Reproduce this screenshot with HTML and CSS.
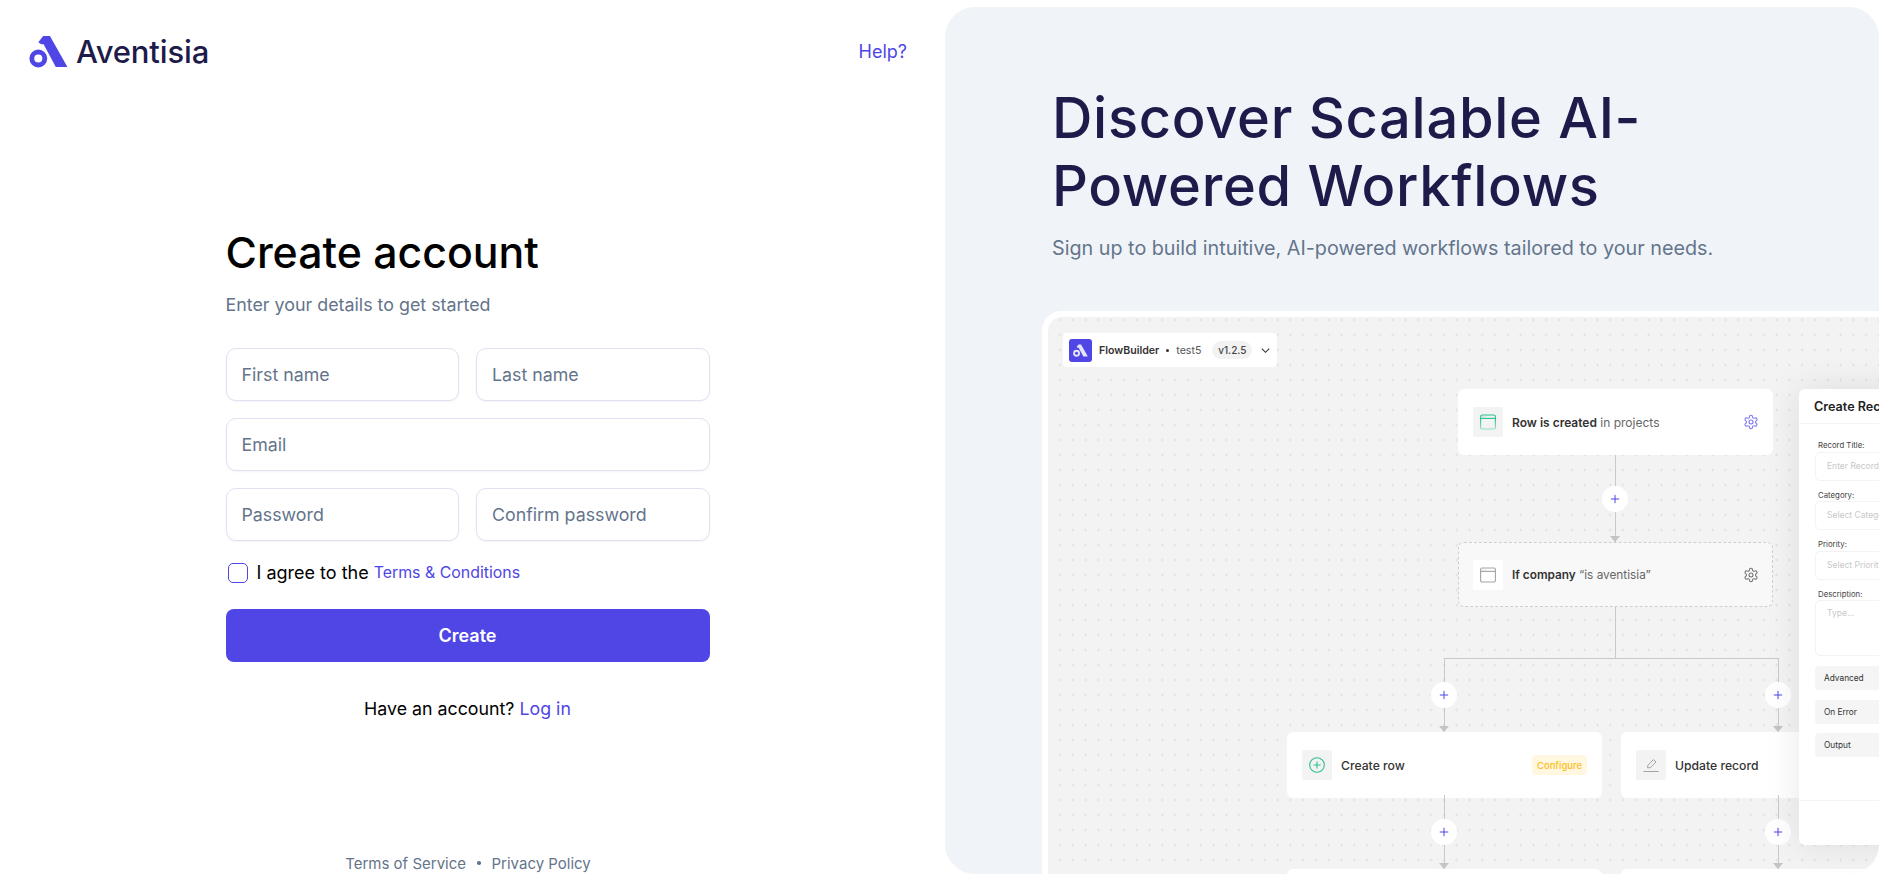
FILE: index.html
```html
<!DOCTYPE html>
<html lang="en">
<head>
<meta charset="utf-8">
<title>Aventisia - Create account</title>
<link rel="stylesheet" href="styles.css">
</head>
<body>
<svg class="defs" width="0" height="0" aria-hidden="true">
  <defs>
    <linearGradient id="winfade" x1="0" y1="0" x2="0" y2="1">
      <stop offset="0.3" stop-color="#2cc08e"/>
      <stop offset="1" stop-color="#93e2c4"/>
    </linearGradient>
  </defs>
  <symbol id="gear" viewBox="0 0 24 24">
    <path d="M12.22 2h-.44a2 2 0 0 0-2 2v.18a2 2 0 0 1-1 1.73l-.43.25a2 2 0 0 1-2 0l-.15-.08a2 2 0 0 0-2.73.73l-.22.38a2 2 0 0 0 .73 2.73l.15.1a2 2 0 0 1 1 1.72v.51a2 2 0 0 1-1 1.74l-.15.09a2 2 0 0 0-.73 2.73l.22.38a2 2 0 0 0 2.73.73l.15-.08a2 2 0 0 1 2 0l.43.25a2 2 0 0 1 1 1.73V20a2 2 0 0 0 2 2h.44a2 2 0 0 0 2-2v-.18a2 2 0 0 1 1-1.73l.43-.25a2 2 0 0 1 2 0l.15.08a2 2 0 0 0 2.73-.73l.22-.39a2 2 0 0 0-.73-2.73l-.15-.08a2 2 0 0 1-1-1.74v-.5a2 2 0 0 1 1-1.74l.15-.09a2 2 0 0 0 .73-2.73l-.22-.38a2 2 0 0 0-2.73-.73l-.15.08a2 2 0 0 1-2 0l-.43-.25a2 2 0 0 1-1-1.73V4a2 2 0 0 0-2-2z"/>
    <circle cx="12" cy="12" r="3"/>
  </symbol>
  <symbol id="plus" viewBox="0 0 12 12">
    <path d="M6 1v10M1 6h10"/>
  </symbol>
</svg>
<div class="page">
  <section class="left">
    <header class="top">
      <a class="brand" href="#">
        <svg class="brand-mark" viewBox="0 0 40 34" aria-hidden="true">
          <path fill="#4f46e5" fill-rule="evenodd" d="M9.5 15a9.2 9.2 0 1 1 0 18.4 9.2 9.2 0 0 1 0-18.4zm0 5a4.2 4.2 0 1 0 0 8.4 4.2 4.2 0 0 0 0-8.4z"/>
          <path fill="#4f46e5" d="M9.5 7.5 14.5 1h7L39.5 33h-12L15 9.5h-2.5z"/>
        </svg>
        <span class="brand-name">Aventisia</span>
      </a>
      <a class="help" href="#">Help?</a>
    </header>
    <main class="form-wrap">
      <form class="form">
        <h1 class="title">Create account</h1>
        <p class="subtitle">Enter your details to get started</p>
        <div class="fields">
          <input class="input" type="text" placeholder="First name">
          <input class="input" type="text" placeholder="Last name">
          <input class="input wide" type="email" placeholder="Email">
          <input class="input" type="password" placeholder="Password">
          <input class="input" type="password" placeholder="Confirm password">
        </div>
        <label class="agree">
          <span class="check"></span>
          <span>I agree to the</span>
          <a class="terms" href="#">Terms &amp; Conditions</a>
        </label>
        <button class="submit" type="button">Create</button>
        <p class="login">Have an account? <a href="#">Log in</a></p>
      </form>
    </main>
    <footer class="legal">
      <a href="#">Terms of Service</a>
      <span class="legal-dot"></span>
      <a href="#">Privacy Policy</a>
    </footer>
  </section>

  <aside class="promo">
    <h2 class="promo-title">Discover Scalable AI-<br>Powered Workflows</h2>
    <p class="promo-sub">Sign up to build intuitive, AI-powered workflows tailored to your needs.</p>
    <div class="frame">
      <div class="toolbar">
        <span class="tb-logo">
          <svg viewBox="0 0 40 34" aria-hidden="true">
            <path fill="#fff" fill-opacity=".85" fill-rule="evenodd" d="M9.5 15a9.2 9.2 0 1 1 0 18.4 9.2 9.2 0 0 1 0-18.4zm0 5a4.2 4.2 0 1 0 0 8.4 4.2 4.2 0 0 0 0-8.4z"/>
            <path fill="#fff" fill-opacity=".85" d="M9.5 7.5 14.5 1h7L39.5 33h-12L15 9.5h-2.5z"/>
          </svg>
        </span>
        <b class="tb-name">FlowBuilder</b>
        <span class="tb-dot"></span>
        <span class="tb-test">test5</span>
        <span class="tb-ver">v1.2.5</span>
        <svg class="tb-chev" viewBox="0 0 12 12" aria-hidden="true"><path d="M2 4l4 4 4-4"/></svg>
      </div>

      <span class="edge e1"></span>
      <span class="edge e2 noarrow"></span>
      <span class="hline"></span>
      <span class="edge e3"></span>
      <span class="edge e4"></span>

      <span class="add a1"><svg><use href="#plus"/></svg></span>
      <span class="add a2"><svg><use href="#plus"/></svg></span>
      <span class="add a3"><svg><use href="#plus"/></svg></span>

      <div class="node n1">
        <span class="ico">
          <svg viewBox="0 0 16 16" aria-hidden="true">
            <rect x=".6" y="1" width="14.8" height="14" rx="1.5" fill="none" stroke="url(#winfade)" stroke-width="1.1"/>
            <path d="M.6 4.4h14.8" stroke="#2cc08e" stroke-width="1.1"/>
            <path d="M2 2.8h.6M3.5 2.8h.6M5 2.8h.6" stroke="#2cc08e" stroke-width=".6"/>
          </svg>
        </span>
        <span class="node-text"><b>Row is created</b> in projects</span>
        <svg class="gear gear-violet"><use href="#gear"/></svg>
      </div>
      <div class="node n2">
        <span class="ico ico-white">
          <svg viewBox="0 0 16 16" aria-hidden="true">
            <rect x=".6" y="1" width="14.8" height="14" rx="1.5" fill="none" stroke="#a3a3a3" stroke-width="1.1"/>
            <path d="M.6 4.4h14.8" stroke="#a3a3a3" stroke-width="1.1"/>
            <path d="M2 2.8h.6M3.5 2.8h.6M5 2.8h.6" stroke="#a3a3a3" stroke-width=".6"/>
          </svg>
        </span>
        <span class="node-text"><b>If company</b> “is aventisia”</span>
        <svg class="gear"><use href="#gear"/></svg>
      </div>
      <div class="node n3">
        <span class="ico">
          <svg viewBox="0 0 16 16" aria-hidden="true">
            <circle cx="8" cy="8" r="7.3" fill="none" stroke="#2cc08e" stroke-width="1.1"/>
            <path d="M8 4.4v7.2M4.4 8h7.2" stroke="#2cc08e" stroke-width="1.1"/>
          </svg>
        </span>
        <span class="node-label">Create row</span>
        <span class="chip">Configure</span>
      </div>
      <div class="node n4">
        <span class="ico">
          <svg viewBox="0 0 16 16" aria-hidden="true">
            <path d="M4.5 10.8l.5-2.6L10.4 2.6 13 5 7.4 10.6z" fill="none" stroke="#a3a3a3" stroke-width="1"/>
            <path d="M.4 14.5h15.2" stroke="#a3a3a3" stroke-width="1"/>
          </svg>
        </span>
        <span class="node-label">Update record</span>
      </div>
      <div class="node n5"></div>
      <div class="node n6"></div>

      <span class="edge e5"></span>
      <span class="edge e6"></span>
      <span class="add a4"><svg><use href="#plus"/></svg></span>
      <span class="add a5"><svg><use href="#plus"/></svg></span>

      <div class="sheet">
        <div class="sheet-head">Create Record</div>
        <div class="sheet-body">
          <div class="field"><span class="f-label">Record Title:</span><span class="f-input">Enter Record Title</span></div>
          <div class="field"><span class="f-label">Category:</span><span class="f-input">Select Category</span></div>
          <div class="field"><span class="f-label">Priority:</span><span class="f-input">Select Priority</span></div>
          <div class="field"><span class="f-label">Description:</span><span class="f-input f-area">Type...</span></div>
          <div class="fold">Advanced</div>
          <div class="fold">On Error</div>
          <div class="fold">Output</div>
        </div>
        <div class="sheet-foot"></div>
      </div>
    </div>
  </aside>
</div>
</body>
</html>
```

FILE: styles.css
```css
* { box-sizing: border-box; }

html, body {
  margin: 0;
  height: 100%;
  background: #fff;
  font-family: Inter, "Noto Sans", sans-serif;
  overflow: hidden;
}

a { text-decoration: none; }

.defs { position: absolute; }

.page {
  display: flex;
  height: 875px;
}

/* Left column */
.left {
  flex: 0 0 936px;
  display: flex;
  flex-direction: column;
}

.top {
  display: flex;
  align-items: center;
  justify-content: space-between;
  height: 103px;
  padding: 0 29px;
}

.brand { display: flex; align-items: center; gap: 8px; }
.brand-mark { width: 39px; height: 33px; display: block; }
.brand-name {
  font-family: Inter, sans-serif;
  font-size: 31px;
  font-weight: 500;
  letter-spacing: -0.15px;
  color: #1e1b4b;
  line-height: 33px;
}

.help { font-size: 18px; color: #4f46e5; }

.form-wrap { flex: 1; display: flex; justify-content: center; padding-top: 122px; }

.form { width: 484px; margin-right: 1px; }

.title {
  margin: 0;
  font-size: 42.8px;
  font-weight: 500;
  line-height: 56px;
  color: #000;
}

.subtitle {
  margin: 11.5px 0 0;
  font-size: 17.85px;
  line-height: 24px;
  color: #64748b;
}

.fields {
  display: grid;
  grid-template-columns: 1fr 1fr;
  column-gap: 17px;
  row-gap: 17px;
  margin-top: 31px;
}

.input {
  height: 53px;
  width: 100%;
  padding: 0 15px;
  border: 1px solid #e2e0f3;
  border-radius: 10px;
  background: #fff;
  font: 400 17.8px Inter, sans-serif;
  color: #1e1b4b;
  outline: none;
  box-shadow: 0 1px 2px rgba(30, 27, 75, .05);
}
.input::placeholder { color: #64748b; opacity: 1; }
.wide { grid-column: 1 / -1; }

.agree {
  display: flex;
  align-items: center;
  margin-top: 21px;
  padding-left: 2px;
  font-size: 18px;
  line-height: 22px;
  color: #000;
}

.check {
  width: 20px;
  height: 20px;
  margin-right: 9px;
  border: 1.5px solid #4f46e5;
  border-radius: 5px;
}

.terms { margin-left: 5px; font-size: 15.9px; color: #4f46e5; }

.submit {
  display: block;
  width: 100%;
  height: 53px;
  margin-top: 25.2px;
  border: 0;
  border-radius: 8px;
  background: #4f46e5;
  color: #fff;
  font: 600 18px Inter, sans-serif;
}

.login {
  margin: 35.2px 0 0;
  text-align: center;
  font-size: 17.8px;
  line-height: 24px;
  color: #000;
}
.login a { color: #4f46e5; }

.legal {
  display: flex;
  justify-content: center;
  align-items: center;
  gap: 11px;
  height: 24px;
  font-size: 15px;
}
.legal a { color: #64748b; }
.legal-dot { width: 3.5px; height: 3.5px; border-radius: 50%; background: #64748b; }

/* Right panel */
.promo {
  flex: 1;
  margin: 7px 0 1px 9px;
  padding: 76.5px 0 0 107px;
  background: #f0f4f9;
  border-radius: 30px;
  overflow: hidden;
  min-width: 0;
}

.promo-title {
  margin: 0;
  font-size: 56px;
  font-weight: 500;
  line-height: 68px;
  letter-spacing: .7px;
  color: #1e1b4b;
}

.promo-sub {
  margin: 14.5px 0 0;
  font-size: 19.75px;
  line-height: 28px;
  color: #64748b;
}

.frame {
  position: relative;
  width: 1000px;
  height: 700px;
  margin: 49px 0 0 -10px;
  border: 6px solid #fff;
  border-radius: 20px;
  background-color: #f3f3f3;
  background-image: radial-gradient(circle, #e2e2e2 1px, transparent 1.3px);
  background-size: 12.8px 15px;
  background-position: 5.6px -4.5px;
}

.toolbar {
  position: absolute;
  left: 15px;
  top: 16px;
  width: 214px;
  height: 34px;
  display: flex;
  align-items: center;
  padding-left: 6px;
  background: #fff;
  border-radius: 4px;
  font-size: 10.6px;
  color: #333;
}
.tb-logo {
  width: 23px;
  height: 23px;
  padding: 5px 4px;
  border-radius: 3px;
  background: #4f46e5;
}
.tb-logo svg { display: block; width: 15px; height: 13px; }
.tb-name { margin-left: 7px; font-weight: 600; }
.tb-dot { width: 3px; height: 3px; margin: 0 7px; border-radius: 50%; background: #333; }
.tb-test { color: #555; }
.tb-ver {
  display: flex;
  align-items: center;
  justify-content: center;
  width: 40px;
  height: 18px;
  margin-left: 11px;
  border-radius: 9px;
  background: #f2f2f2;
  font-weight: 500;
  font-size: 10px;
  color: #444;
}
.tb-chev { width: 11px; height: 11px; margin-left: 8px; fill: none; stroke: #333; stroke-width: 1.2; }

/* Diagram */
.edge {
  position: absolute;
  width: 1.5px;
  background: #c9c9c9;
}
.edge::after {
  content: "";
  position: absolute;
  left: -4.5px;
  bottom: 0;
  border-left: 5.25px solid transparent;
  border-right: 5.25px solid transparent;
  border-top: 6px solid #c4c4c4;
}
.edge.noarrow::after { display: none; }
.e1 { left: 566.5px; top: 138px; height: 87px; }
.e2 { left: 566.5px; top: 290px; height: 52px; }
.e3 { left: 395.5px; top: 341px; height: 74px; }
.e4 { left: 729.5px; top: 341px; height: 74px; }
.e5 { left: 395.5px; top: 478px; height: 74px; }
.e6 { left: 729.5px; top: 478px; height: 74px; }

.hline {
  position: absolute;
  left: 395.5px;
  top: 340.5px;
  width: 335px;
  height: 1.5px;
  background: #c9c9c9;
}

.add {
  position: absolute;
  width: 26px;
  height: 26px;
  display: flex;
  align-items: center;
  justify-content: center;
  border-radius: 50%;
  background: #fff;
}
.add svg { width: 10px; height: 10px; fill: none; stroke: #4f46e5; stroke-width: 1.2; }
.a1 { left: 554px; top: 169px; }
.a2 { left: 383px; top: 365px; }
.a3 { left: 717px; top: 365px; }
.a4 { left: 383px; top: 502px; }
.a5 { left: 717px; top: 502px; }

.node {
  position: absolute;
  width: 315px;
  height: 66px;
  display: flex;
  align-items: center;
  padding: 0 14px 0 15px;
  background: #fff;
  border-radius: 6px;
  font-size: 12px;
  color: #666;
}
.n1 { left: 410px; top: 72px; }
.n2 {
  left: 410px;
  top: 225px;
  height: 65px;
  background: #f8f8f8;
  border: 1px dashed #cfcfcf;
  padding: 0 13px 0 14px;
  font-size: 11.8px;
}
.n3 { left: 239px; top: 415px; padding-right: 15px; }
.n4 { left: 573px; top: 415px; }
.n5 { left: 239px; top: 552px; }
.n6 { left: 573px; top: 552px; }

.ico {
  flex: none;
  width: 30px;
  height: 30px;
  display: flex;
  align-items: center;
  justify-content: center;
  background: #f3f3f3;
  border-radius: 2px;
}
.ico svg { width: 16px; height: 16px; display: block; }
.ico-white { background: #fff; }

.node-text { flex: 1; margin-left: 9px; }
.node-text b { font-weight: 600; color: #333; }
.node-label { flex: 1; margin-left: 9px; font-weight: 500; color: #333; font-size: 12.2px; }

.gear { width: 16px; height: 16px; fill: none; stroke: #737373; stroke-width: 1.6; }
.gear-violet { stroke: #7c74ee; }

.chip {
  width: 55px;
  height: 20px;
  display: flex;
  align-items: center;
  justify-content: center;
  border-radius: 4px;
  background: #fff7e0;
  color: #fbbf24;
  font-size: 9.5px;
  font-weight: 500;
}

.sheet {
  position: absolute;
  left: 751px;
  top: 72px;
  width: 300px;
  height: 456px;
  display: flex;
  flex-direction: column;
  background: #fff;
  border-radius: 6px;
  box-shadow: 0 0 36px rgba(0, 0, 0, .09);
}
.sheet-head {
  height: 35px;
  padding: 0 15px;
  line-height: 35px;
  font-size: 12.6px;
  font-weight: 600;
  color: #222;
  border-bottom: 1px solid #f3f3f3;
  white-space: nowrap;
}
.sheet-body {
  flex: 1;
  padding: 16px 16px 0;
}
.field { margin-bottom: 9px; }
.f-label {
  display: block;
  padding-left: 3px;
  margin-bottom: 1.5px;
  font-size: 7.8px;
  line-height: 10px;
  color: #444;
}
.f-input {
  display: block;
  height: 29px;
  padding-left: 11px;
  border: 1px solid #f3f3f3;
  border-radius: 5px;
  font-size: 8.5px;
  line-height: 27px;
  color: #c8c8c8;
  white-space: nowrap;
}
.f-area { height: 56px; margin-bottom: 10px; line-height: 24px; }
.fold {
  height: 24px;
  margin-bottom: 9.5px;
  padding-left: 9px;
  border-radius: 4px;
  background: #f5f5f5;
  font-size: 8.3px;
  font-weight: 400;
  line-height: 24px;
  color: #333;
}
.sheet-foot { height: 45px; border-top: 1px solid #f3f3f3; }
```
